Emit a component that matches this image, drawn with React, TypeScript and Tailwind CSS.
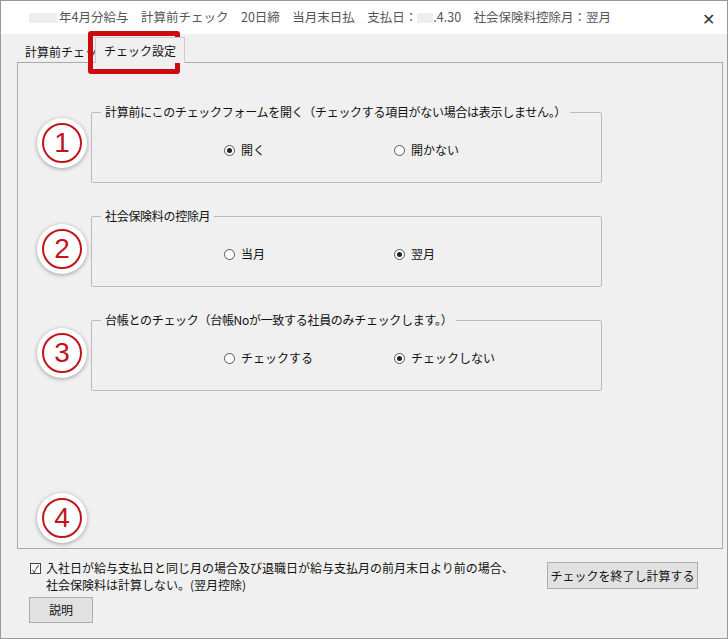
const F = { fontFamily: '"Noto Sans CJK JP", "Liberation Sans", sans-serif' };

function Circ({ n, top }: { n: string; top: number }) {
  return (
    <div
      className="absolute left-[36px] w-[50px] h-[50px] rounded-full bg-white shadow-[0_1px_4px_rgba(0,0,0,0.35)] flex items-center justify-center"
      style={{ top }}
    >
      <div className="w-[40px] h-[40px] rounded-full border-[2px] border-[#c0151b] flex items-center justify-center text-[#c0151b] text-[28px] leading-none" style={{ fontFamily: '"Liberation Sans", sans-serif' }}>
        {n}
      </div>
    </div>
  );
}

function Radio({ on, label }: { on: boolean; label: string }) {
  return (
    <div className="flex items-center gap-[6px]">
      <span className="w-[11px] h-[11px] rounded-full border border-[#555] bg-white flex items-center justify-center">
        {on && <span className="w-[5px] h-[5px] rounded-full bg-[#222]" />}
      </span>
      <span>{label}</span>
    </div>
  );
}

function Group({ title, a, b, aOn }: { title: string; a: string; b: string; aOn: boolean }) {
  return (
    <div className="relative ml-[73px] w-[511px] h-[71px] border border-[#bbb] rounded-[2px] mt-[33px] first:mt-0">
      <div className="absolute -top-[9px] left-[9px] px-[4px] bg-[#f0f0f0] leading-[16px] tracking-[-0.3px]">{title}</div>
      <div className="flex pt-[28px]">
        <div className="w-[132px]" />
        <div className="w-[170px]"><Radio on={aOn} label={a} /></div>
        <Radio on={!aOn} label={b} />
      </div>
    </div>
  );
}

export default function App() {
  return (
    <div className="relative w-[728px] h-[639px] bg-[#f0f0f0] border border-[#999] text-[12px] text-[#111]" style={F}>
      <div className="h-[33px] bg-white flex items-center pl-[28px] text-[#555] text-[12.5px]">
        <span className="w-[28px] h-[10px] bg-[#eee] mr-[2px]" />
        <span>年4月分給与　計算前チェック　20日締　当月末日払　支払日：</span>
        <span className="w-[16px] h-[10px] bg-[#eee]" />
        <span>.4.30　社会保険料控除月：翌月</span>
        <span className="ml-auto mr-[12px] text-[16px] text-[#333]">✕</span>
      </div>
      <div className="flex items-end h-[29px] pl-[24px]">
        <div className="h-[22px] w-[70px] overflow-hidden whitespace-nowrap flex items-center">計算前チェック</div>
        <div className="h-[26px] px-[8px] flex items-center bg-[#f0f0f0] border border-b-0 border-[#ccc] relative z-10">チェック設定</div>
      </div>
      <div className="ml-[16px] w-[706px] h-[487px] border border-[#aaa] -mt-px pt-[49px]">
        <Group title="計算前にこのチェックフォームを開く（チェックする項目がない場合は表示しません。）" a="開く" b="開かない" aOn />
        <Group title="社会保険料の控除月" a="当月" b="翌月" aOn={false} />
        <Group title="台帳とのチェック（台帳Noが一致する社員のみチェックします。）" a="チェックする" b="チェックしない" aOn={false} />
      </div>
      <div className="flex items-start pl-[29px] pr-[29px] mt-[10px]">
        <div className="flex gap-[5px]">
          <span className="mt-[4px] w-[11px] h-[11px] border border-[#444] bg-white text-[10px] leading-[10px] flex items-center justify-center">✓</span>
          <div className="leading-[17px]">
            入社日が給与支払日と同じ月の場合及び退職日が給与支払月の前月末日より前の場合、<br />
            社会保険料は計算しない。(翌月控除)
          </div>
        </div>
        <button className="ml-auto mt-[3px] w-[151px] h-[27px] bg-[#e1e1e1] border border-[#adadad]">チェックを終了し計算する</button>
      </div>
      <button className="ml-[28px] mt-[4px] w-[64px] h-[26px] bg-[#e1e1e1] border border-[#adadad]">説明</button>
      <div className="absolute left-[87px] top-[30px] w-[92px] h-[43px] border-[5px] border-[#cc0a12] rounded-[3px]" />
      <Circ n="1" top={117} />
      <Circ n="2" top={223} />
      <Circ n="3" top={327} />
      <Circ n="4" top={492} />
    </div>
  );
}
